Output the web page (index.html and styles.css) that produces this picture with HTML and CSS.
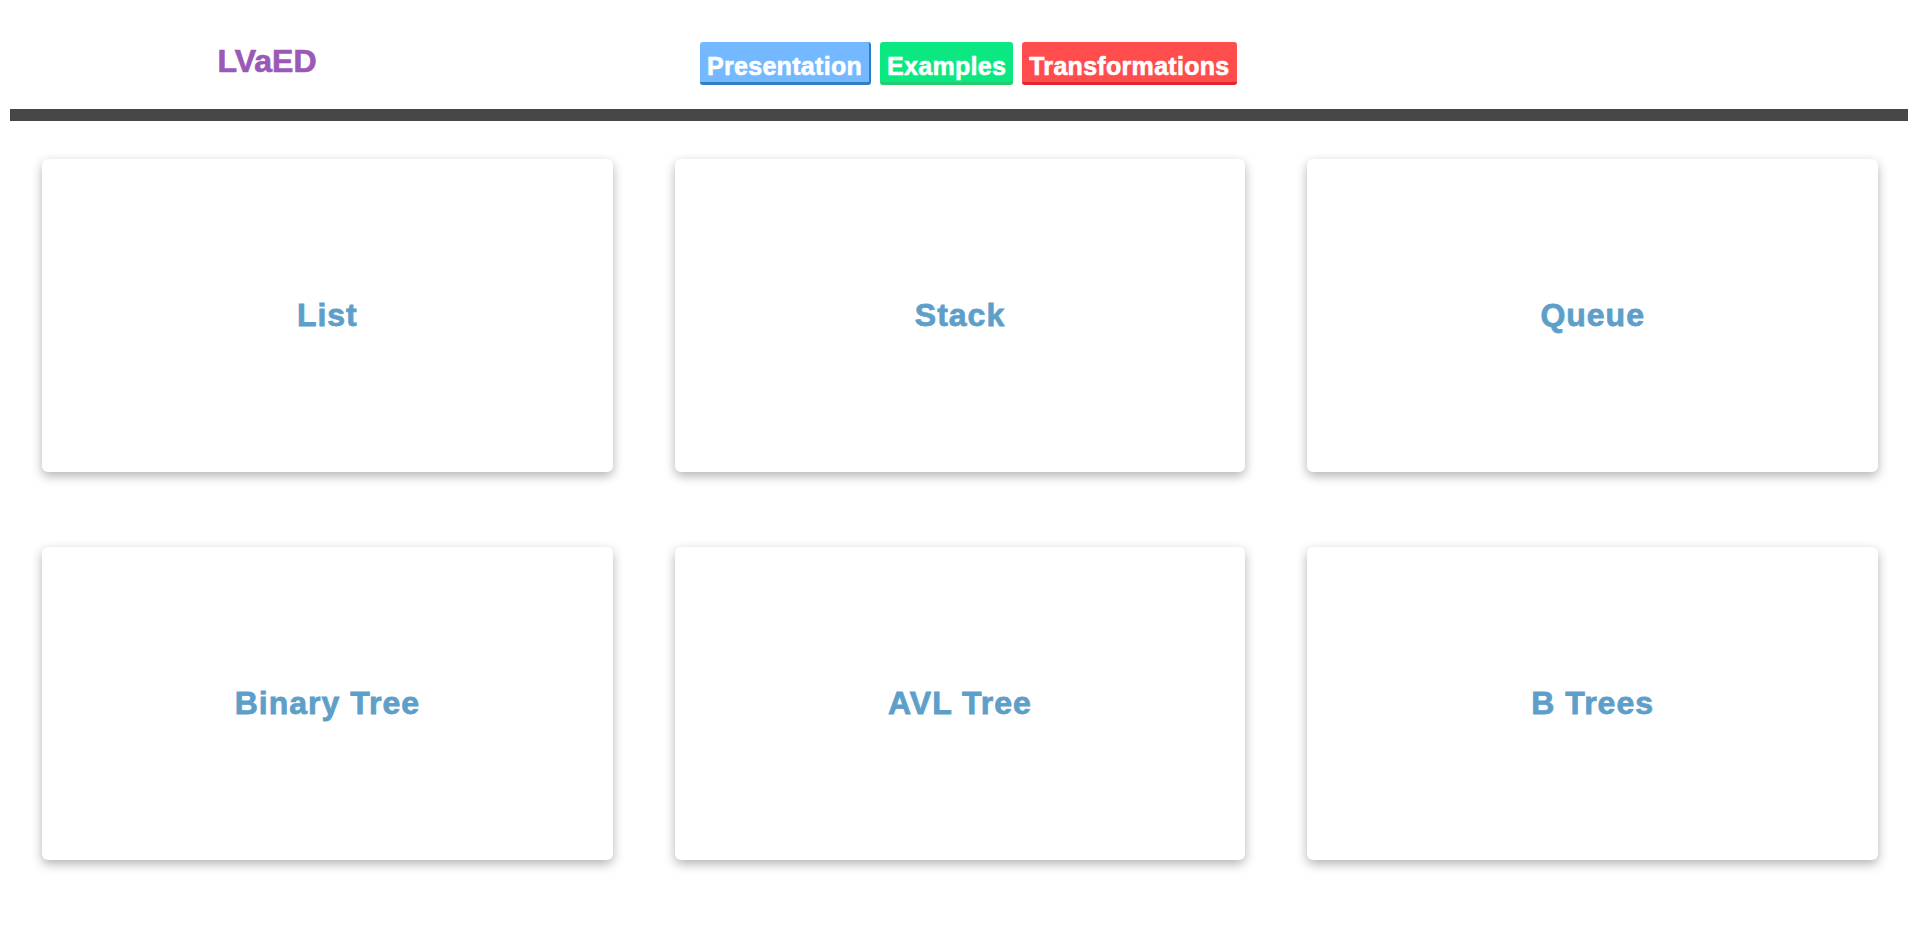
FILE: index.html
```html
<!DOCTYPE html>
<html lang="en">
<head>
<meta charset="utf-8">
<title>LVaED</title>
<link rel="stylesheet" href="styles.css">
</head>
<body>
<header class="header">
  <div class="logo-col"><h1 class="logo">LVaED</h1></div>
  <nav class="nav">
    <a class="btn btn-blue" href="#">Presentation</a>
    <a class="btn btn-green" href="#">Examples</a>
    <a class="btn btn-red" href="#">Transformations</a>
  </nav>
</header>
<div class="bar"></div>
<main class="grid">
  <div class="card"><span>List</span></div>
  <div class="card"><span>Stack</span></div>
  <div class="card"><span>Queue</span></div>
  <div class="card"><span>Binary Tree</span></div>
  <div class="card"><span>AVL Tree</span></div>
  <div class="card"><span>B Trees</span></div>
</main>
</body>
</html>
```

FILE: styles.css
```css
html, body {
  background: #ffffff;
}
body {
  margin: 8px;
  font-family: "Liberation Sans", Arial, sans-serif;
}
.header {
  height: 101px;
  display: flex;
  align-items: flex-start;
}
.logo-col {
  width: 518px;
  display: flex;
  justify-content: center;
  padding-top: 37px;
}
.logo {
  margin: 0;
  font-size: 32px;
  font-weight: 700;
  color: #9b59b6;
  line-height: 1;
  -webkit-text-stroke: 0.7px #9b59b6;
}
.nav {
  margin-left: 174px;
  margin-top: 34px;
  display: flex;
  gap: 9px;
}
.btn {
  display: block;
  font-size: 25px;
  font-weight: 700;
  letter-spacing: 0.3px;
  color: #ffffff;
  -webkit-text-stroke: 0.6px #ffffff;
  text-decoration: none;
  line-height: 28px;
  padding: 10px 7px 2px 7px;
  border-radius: 3px;
  border-bottom: 3px solid;
}
.btn-blue {
  background: #74b9ff;
  border-bottom-color: #2f80c0;
  border-right: 2px solid #2f80c0;
}
.btn-green {
  background: #0be881;
  border-bottom-color: #25cc6c;
}
.btn-red {
  background: #ff4d4d;
  border-bottom-color: #e0262e;
}
.bar {
  height: 12px;
  background: #474747;
  margin: 0 -2px 0 2px;
}
.grid {
  display: grid;
  grid-template-columns: repeat(3, 1fr);
  column-gap: 62px;
  row-gap: 75px;
  padding: 38px 30px 40px 34px;
}
.card {
  height: 313px;
  background: #ffffff;
  border-radius: 6px;
  box-shadow: 0 4px 11px rgba(0, 0, 0, 0.3);
  display: flex;
  align-items: center;
  justify-content: center;
}
.card span {
  font-size: 32px;
  font-weight: 700;
  letter-spacing: 1px;
  color: #5e9fca;
  -webkit-text-stroke: 0.8px #5e9fca;
}
```
